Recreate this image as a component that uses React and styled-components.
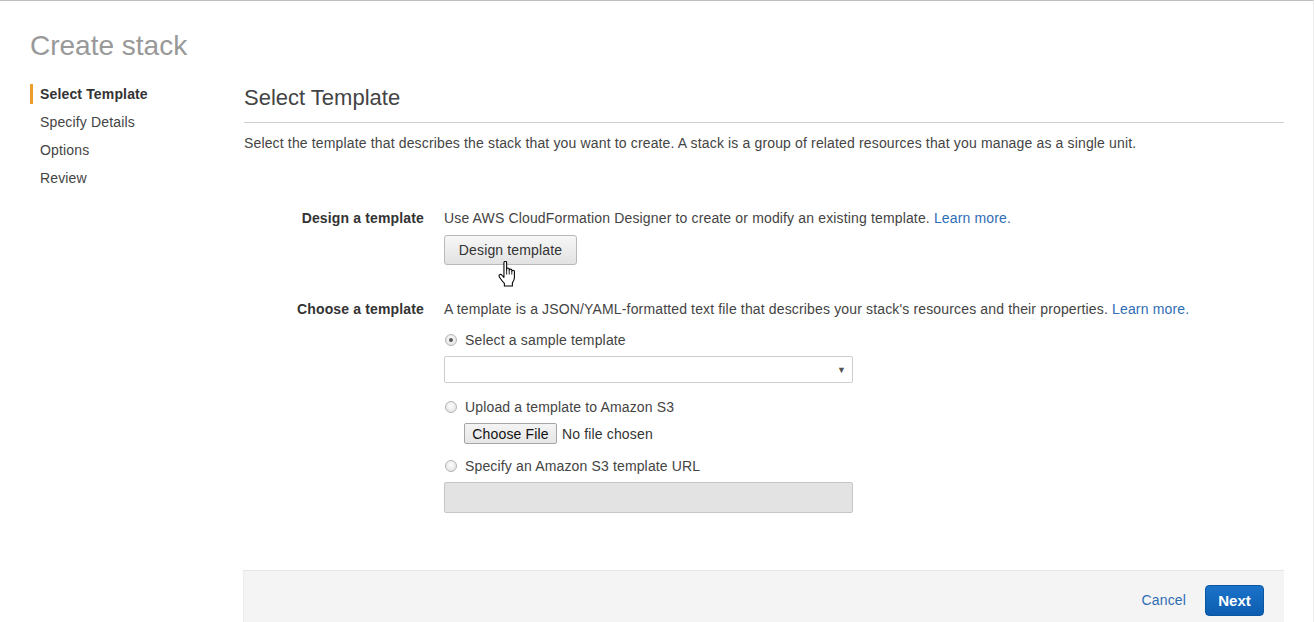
import React from "react";
import styled, { createGlobalStyle } from "styled-components";

const GlobalStyle = createGlobalStyle`
  html, body {
    margin: 0;
    padding: 0;
    background: #fff;
  }
  body {
    font-family: "Liberation Sans", Arial, sans-serif;
    font-size: 14px;
    color: #444;
  }
`;

const Page = styled.div`
  box-sizing: border-box;
  width: 1314px;
  height: 622px;
  overflow: hidden;
  border-top: 1px solid #bdbdbd;
  border-right: 1px solid #ededed;
  padding-top: 29px;
`;

const PageTitle = styled.h1`
  margin: 0 0 22px 30px;
  font-size: 28px;
  line-height: 32px;
  font-weight: normal;
  color: #999;
`;

const Body = styled.div`
  display: flex;
  align-items: flex-start;
  letter-spacing: 0.15px;
`;

const Sidebar = styled.nav`
  width: 244px;
  padding-left: 30px;
  box-sizing: border-box;
  display: flex;
  flex-direction: column;
  gap: 8px;
  flex-shrink: 0;
`;

const StepItem = styled.div`
  border-left: 3px solid ${(p) => (p.$active ? "#eb9d2e" : "transparent")};
  padding-left: 7px;
  line-height: 20px;
  font-size: 14px;
  font-weight: ${(p) => (p.$active ? "bold" : "normal")};
  color: ${(p) => (p.$active ? "#333" : "#444")};
`;

const Main = styled.main`
  width: 1041px;
  flex-shrink: 0;
`;

const Section = styled.div`
  width: 1040px;
`;

const Heading = styled.h2`
  margin: 0;
  padding-bottom: 11px;
  border-bottom: 1px solid #cfcfcf;
  font-size: 22px;
  line-height: 27px;
  font-weight: normal;
  letter-spacing: 0;
  color: #444;
`;

const Lead = styled.p`
  margin: 10px 0 0;
  line-height: 20px;
`;

const Form = styled.div`
  margin-top: 55px;
  display: flex;
  flex-direction: column;
  gap: 34px;
`;

const FormRow = styled.div`
  display: grid;
  grid-template-columns: 180px 1fr;
  column-gap: 20px;
`;

const Label = styled.div`
  text-align: right;
  font-weight: bold;
  color: #333;
  line-height: 20px;
`;

const Field = styled.div`
  display: flex;
  flex-direction: column;
  align-items: flex-start;
`;

const Help = styled.div`
  line-height: 20px;
`;

const Link = styled.a`
  color: #2f6db5;
  text-decoration: none;
`;

const ButtonWrap = styled.div`
  position: relative;
  margin-top: 7px;
`;

const SecondaryButton = styled.button`
  box-sizing: border-box;
  height: 30px;
  width: 133px;
  border: 1px solid #b9b9b9;
  border-radius: 3px;
  background: linear-gradient(#f7f7f7, #e2e2e2);
  font-family: inherit;
  font-size: 14px;
  letter-spacing: 0.15px;
  color: #333;
  padding: 0;
`;

const Cursor = styled.svg`
  position: absolute;
  left: 53px;
  top: 26px;
  width: 21px;
  height: 27px;
  pointer-events: none;
`;

const Options = styled.div`
  margin-top: 11px;
  display: flex;
  flex-direction: column;
  align-items: flex-start;
`;

const RadioRow = styled.label`
  display: flex;
  align-items: center;
  gap: 8px;
  line-height: 20px;
  margin-top: ${(p) => p.$gap || 0}px;
`;

const Radio = styled.span`
  box-sizing: border-box;
  width: 12px;
  height: 12px;
  margin-left: 1px;
  border-radius: 50%;
  border: 1px solid #b4b4b4;
  background: radial-gradient(circle at 50% 40%, #fdfdfd, #dedede);
  display: flex;
  align-items: center;
  justify-content: center;

  &::after {
    content: "";
    width: 4px;
    height: 4px;
    border-radius: 50%;
    background: ${(p) => (p.$checked ? "#5a5a5a" : "transparent")};
  }
`;

const SelectBox = styled.div`
  box-sizing: border-box;
  margin-top: 6px;
  width: 409px;
  height: 27px;
  border: 1px solid #cdcdcd;
  border-radius: 2px;
  background: #fff;
  display: flex;
  align-items: center;
  justify-content: flex-end;
  padding-right: 6px;
  font-size: 9px;
  color: #555;
`;

const FileRow = styled.div`
  margin: 6px 0 0 20px;
  display: flex;
  align-items: center;
  gap: 5px;
`;

const FileButton = styled.button`
  box-sizing: border-box;
  height: 21px;
  width: 93px;
  border: 1px solid #a6a6a6;
  border-radius: 2px;
  background: linear-gradient(#f4f4f4, #e6e6e6);
  font-family: inherit;
  font-size: 14px;
  letter-spacing: 0.15px;
  color: #111;
  padding: 0;
`;

const FileName = styled.span`
  color: #333;
`;

const UrlInput = styled.div`
  box-sizing: border-box;
  margin-top: 6px;
  width: 409px;
  height: 31px;
  border: 1px solid #c6c6c6;
  border-radius: 2px;
  background: #e3e3e3;
`;

const Footer = styled.div`
  margin-top: 57px;
  margin-left: -1px;
  width: 1041px;
  height: 60px;
  box-sizing: border-box;
  background: #f4f4f4;
  border-top: 1px solid #e6e6e6;
  border-left: 1px solid #ececec;
  display: flex;
  align-items: flex-start;
  justify-content: flex-end;
  gap: 19px;
  padding: 14px 20px 0 0;
`;

const CancelLink = styled(Link)`
  line-height: 31px;
  font-size: 14px;
`;

const PrimaryButton = styled.button`
  box-sizing: border-box;
  height: 31px;
  width: 59px;
  border: 1px solid #0b56a0;
  border-radius: 4px;
  background: linear-gradient(#1b73c9, #0c5db0);
  color: #fff;
  font-family: inherit;
  font-size: 15px;
  font-weight: bold;
  padding: 0;
`;

const steps = ["Select Template", "Specify Details", "Options", "Review"];

function HandCursor() {
  return (
    <Cursor viewBox="0 0 19 25">
      <path
        d="M6.2 1.6C6.2 0.8 6.8 0.3 7.4 0.3C8.1 0.3 8.7 0.8 8.7 1.6V8.2V7.6C8.7 6.9 9.2 6.5 9.9 6.5C10.6 6.5 11.1 6.9 11.1 7.6V8.6C11.1 7.9 11.6 7.5 12.3 7.5C13 7.5 13.5 7.9 13.5 8.6V9.6C13.5 8.9 14 8.5 14.7 8.5C15.4 8.5 15.9 8.9 15.9 9.6V15.2C15.9 17.6 14.8 19.2 14 20.2V23.2H6.6V20.8C5.6 19.8 3.6 17.2 2.1 15C1.4 14 1.6 13 2.3 12.6C3 12.2 3.8 12.5 4.4 13.2L6.2 15.2Z"
        fill="#fff"
        stroke="#000"
        strokeWidth="1"
        strokeLinejoin="round"
      />
      <path d="M8.7 8.2V12.5M11.1 8.6V12.5M13.5 9.6V12.5" stroke="#000" strokeWidth="0.8" />
    </Cursor>
  );
}

export default function App() {
  return (
    <>
      <GlobalStyle />
      <Page>
        <PageTitle>Create stack</PageTitle>
        <Body>
          <Sidebar>
            {steps.map((step, i) => (
              <StepItem key={step} $active={i === 0}>
                {step}
              </StepItem>
            ))}
          </Sidebar>
          <Main>
            <Section>
              <Heading>Select Template</Heading>
              <Lead>
                Select the template that describes the stack that you want to create. A stack is a
                group of related resources that you manage as a single unit.
              </Lead>
              <Form>
                <FormRow>
                  <Label>Design a template</Label>
                  <Field>
                    <Help>
                      Use AWS CloudFormation Designer to create or modify an existing template.{" "}
                      <Link href="#">Learn more.</Link>
                    </Help>
                    <ButtonWrap>
                      <SecondaryButton>Design template</SecondaryButton>
                      <HandCursor />
                    </ButtonWrap>
                  </Field>
                </FormRow>
                <FormRow>
                  <Label>Choose a template</Label>
                  <Field>
                    <Help>
                      A template is a JSON/YAML-formatted text file that describes your stack's
                      resources and their properties. <Link href="#">Learn more.</Link>
                    </Help>
                    <Options>
                      <RadioRow>
                        <Radio $checked />
                        Select a sample template
                      </RadioRow>
                      <SelectBox>▼</SelectBox>
                      <RadioRow $gap={14}>
                        <Radio />
                        Upload a template to Amazon S3
                      </RadioRow>
                      <FileRow>
                        <FileButton>Choose File</FileButton>
                        <FileName>No file chosen</FileName>
                      </FileRow>
                      <RadioRow $gap={12}>
                        <Radio />
                        Specify an Amazon S3 template URL
                      </RadioRow>
                      <UrlInput />
                    </Options>
                  </Field>
                </FormRow>
              </Form>
            </Section>
            <Footer>
              <CancelLink href="#">Cancel</CancelLink>
              <PrimaryButton>Next</PrimaryButton>
            </Footer>
          </Main>
        </Body>
      </Page>
    </>
  );
}
